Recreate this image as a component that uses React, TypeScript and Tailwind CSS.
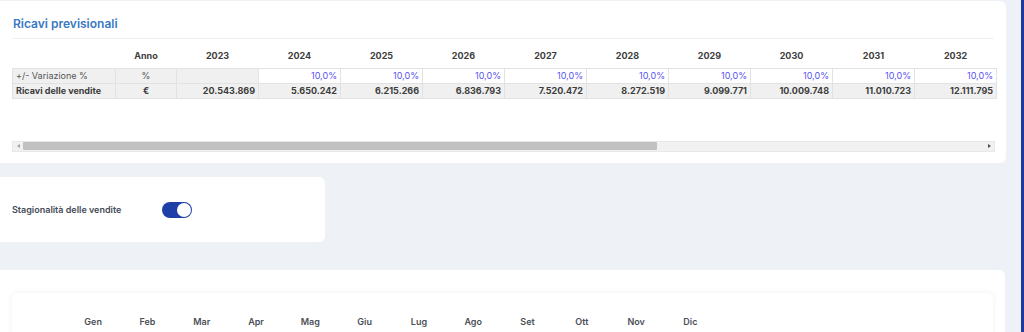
import React from 'react';

const YEARS = [2023, 2024, 2025, 2026, 2027, 2028, 2029, 2030, 2031, 2032];
const RICAVI = ['20.543.869', '5.650.242', '6.215.266', '6.836.793', '7.520.472', '8.272.519', '9.099.771', '10.009.748', '11.010.723', '12.111.795'];
const MONTHS = ['Gen', 'Feb', 'Mar', 'Apr', 'Mag', 'Giu', 'Lug', 'Ago', 'Set', 'Ott', 'Nov', 'Dic'];

const cell = 'border border-[#e2e2e2] px-[3px] h-[15px] leading-[13px]';

const RicaviTable: React.FC = () => (
  <table className="border-collapse table-fixed w-[984px] text-[9px] text-[#3d3d3d]">
    <colgroup>
      <col className="w-[103px]" />
      <col className="w-[61px]" />
      {YEARS.map((y) => (
        <col key={y} className="w-[82px]" />
      ))}
    </colgroup>
    <thead>
      <tr className="h-[18px]">
        <th></th>
        <th className="font-bold text-center">Anno</th>
        {YEARS.map((y) => (
          <th key={y} className="font-bold text-center">{y}</th>
        ))}
      </tr>
      <tr className="h-[3px]"><th colSpan={12}></th></tr>
    </thead>
    <tbody>
      <tr>
        <td className={`${cell} bg-[#f0f0f0] text-[#555]`}>+/- Variazione %</td>
        <td className={`${cell} bg-[#f0f0f0] text-center text-[#555]`}>%</td>
        <td className={`${cell} bg-[#f0f0f0]`}></td>
        {YEARS.slice(1).map((y) => (
          <td key={y} className={`${cell} bg-white text-right text-[#5b55f0]`}>10,0%</td>
        ))}
      </tr>
      <tr>
        <td className={`${cell} bg-[#f0f0f0] font-bold`}>Ricavi delle vendite</td>
        <td className={`${cell} bg-[#f0f0f0] font-bold text-center`}>€</td>
        {RICAVI.map((v) => (
          <td key={v} className={`${cell} bg-[#f0f0f0] font-bold text-right`}>{v}</td>
        ))}
      </tr>
    </tbody>
  </table>
);

const Scrollbar: React.FC = () => (
  <div className="flex items-center h-[11px] w-[983px] bg-[#f1f1f1] border border-[#e8e8e8]">
    <div className="w-[10px] flex justify-center">
      <div className="w-0 h-0 border-y-[2.5px] border-y-transparent border-r-[3px] border-r-[#a3a3a3]" />
    </div>
    <div className="h-[8px] w-[634px] bg-[#c1c1c1] rounded-[1px]" />
    <div className="flex-1" />
    <div className="w-[10px] flex justify-center">
      <div className="w-0 h-0 border-y-[2.5px] border-y-transparent border-l-[3px] border-l-[#505050]" />
    </div>
  </div>
);

const App: React.FC = () => {
  return (
    <div className="relative w-[1024px] h-[332px] overflow-hidden bg-[#eef1f5] font-['Inter',sans-serif]">
      <div className="flex flex-col w-[1006px] pt-px">
        <section className="bg-white rounded-r-md h-[162px] px-3">
          <h2 className="pt-[14px] pb-[5px] pl-px text-[12px] font-semibold text-[#3a79c3] border-b border-[#f0f0f0]">
            Ricavi previsionali
          </h2>
          <div className="pt-[8px]">
            <RicaviTable />
          </div>
          <div className="mt-[42px]">
            <Scrollbar />
          </div>
        </section>

        <section className="mt-[14px] w-[325px] h-[65px] bg-white rounded-r-md flex items-center pl-3">
          <span className="text-[9px] font-semibold text-[#454b57] w-[150px]">Stagionalità delle vendite</span>
          <button className="relative w-[30px] h-[16px] rounded-full bg-[#1f3fa8]">
            <span className="absolute right-[1px] top-[1px] w-[14px] h-[14px] rounded-full bg-white" />
          </button>
        </section>

        <section className="mt-[28px] w-[1005px] bg-white rounded-tr-md h-[80px] px-3 pt-[23px]">
          <div className="bg-white rounded-md shadow-[0_0_6px_rgba(0,0,0,0.06)] w-[981px] h-[60px] pt-[22px] pl-[54px]">
            <div className="flex text-[9px] font-semibold text-[#4b4f58]">
              {MONTHS.map((m) => (
                <div key={m} className="w-[54.3px] text-center">{m}</div>
              ))}
            </div>
          </div>
        </section>
      </div>
      <div className="absolute right-0 top-0 h-full w-[3px] bg-[#1d3a9c]" />
    </div>
  );
};

export default App;
